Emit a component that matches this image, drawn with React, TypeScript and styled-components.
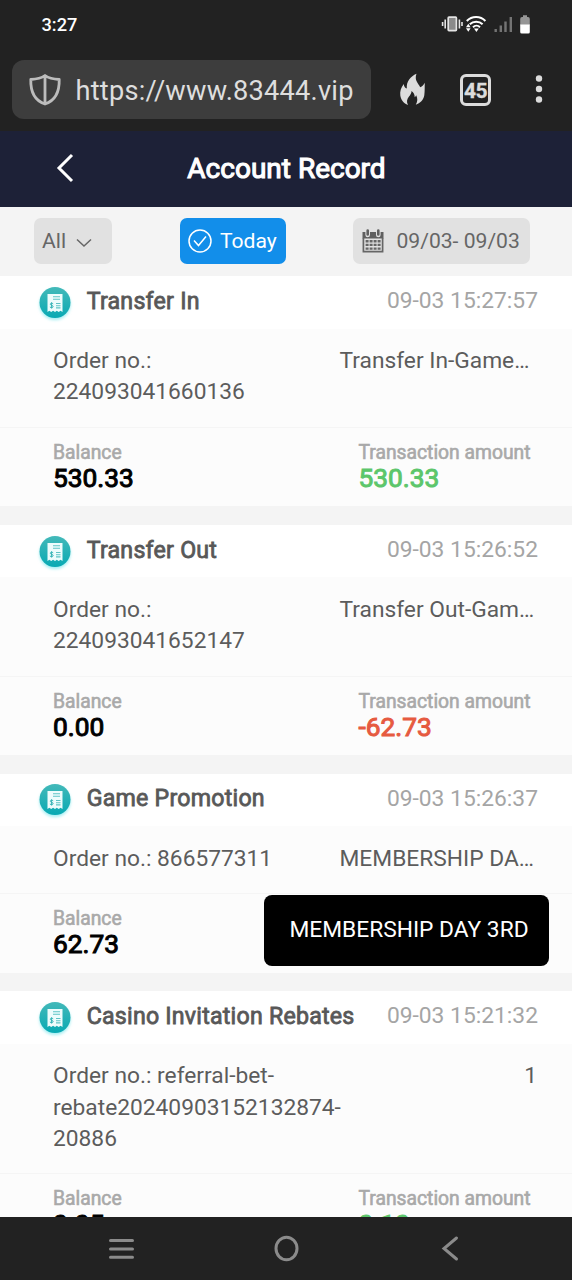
import React from "react";
import styled, { createGlobalStyle } from "styled-components";

const GlobalStyle = createGlobalStyle`
  * { box-sizing: border-box; }
  body { margin: 0; background: #222; font-family: Roboto, "Liberation Sans", sans-serif; }
`;

const Screen = styled.div`
  width: 572px;
  height: 1280px;
  display: flex;
  flex-direction: column;
  overflow: hidden;
  background: #f4f4f4;
`;

const StatusBar = styled.div`
  height: 48px;
  flex: none;
  display: flex;
  align-items: center;
  justify-content: space-between;
  padding: 0 40px 0 41.5px;
  background: #222;
`;

const Clock = styled.span`
  color: #fff;
  font-size: 18.2px;
  font-weight: 500;
`;

const StatusIcons = styled.svg`
  width: 92px;
  height: 22px;
`;

const BrowserBar = styled.div`
  height: 83px;
  flex: none;
  display: flex;
  align-items: flex-start;
  padding: 12px 0 0 12px;
  background: #222;
`;

const AddressBox = styled.div`
  width: 359px;
  height: 59px;
  display: flex;
  align-items: center;
  padding-left: 16px;
  border-radius: 12px;
  background: #3d3d3d;
`;

const Address = styled.span`
  margin-left: 13.5px;
  padding-top: 3px;
  color: #dedede;
  font-size: 27.2px;
  letter-spacing: 0.22px;
  white-space: nowrap;
`;

const BrowserTools = styled.div`
  height: 59px;
  display: flex;
  align-items: center;
`;

const Flame = styled.svg`
  width: 28px;
  height: 34px;
  margin-left: 27px;
`;

const TabCount = styled.span`
  width: 31px;
  height: 32px;
  margin-left: 34px;
  border: 3px solid #dcdcdc;
  border-radius: 6px;
  color: #dcdcdc;
  font-size: 21px;
  font-weight: 700;
  line-height: 28px;
  text-align: center;
  letter-spacing: -0.5px;
  -webkit-text-stroke: 0.3px #dcdcdc;
`;

const MoreDots = styled.svg`
  width: 8px;
  height: 30px;
  margin: -1px 0 0 44px;
`;

const TitleBar = styled.header`
  height: 76px;
  flex: none;
  display: grid;
  grid-template-columns: 87px 1fr 86px;
  align-items: center;
  background: #1d2137;
`;

const BackIcon = styled.svg`
  width: 20px;
  height: 30px;
  margin: -2px 0 0 55px;
`;

const Title = styled.h1`
  margin: 0;
  padding-bottom: 2px;
  color: #fff;
  font-size: 28px;
  font-weight: 400;
  text-align: center;
  white-space: nowrap;
  -webkit-text-stroke: 1.1px #fff;
`;

const Filters = styled.div`
  height: 69px;
  flex: none;
  display: flex;
  align-items: flex-start;
  justify-content: space-between;
  padding: 11px 42px 0 34px;
`;

const FilterButton = styled.button<{ $width: number; $active?: boolean; $pad: number; $gap: number }>`
  width: ${(p) => p.$width}px;
  height: 46px;
  display: flex;
  align-items: center;
  gap: ${(p) => p.$gap}px;
  padding: 0 0 0 ${(p) => p.$pad}px;
  border: 0;
  border-radius: 7px;
  background: ${(p) => (p.$active ? "#128eea" : "#e1e1e1")};
  color: ${(p) => (p.$active ? "#fff" : "#666")};
  font-family: inherit;
  font-size: 21.1px;
  line-height: 26px;
  white-space: nowrap;
`;

const Chevron = styled.svg`
  width: 16px;
  height: 10px;
  margin-top: 3px;
`;

const Records = styled.main`
  flex: 1;
  min-height: 0;
  overflow: hidden;
`;

const Card = styled.section`
  margin-bottom: 18.6px;
  background: #fcfcfc;
`;

const CardHead = styled.div`
  height: 52.5px;
  display: flex;
  align-items: center;
  padding: 0 34px 3px 34px;
  background: #fff;
`;

const ReceiptIcon = styled.svg`
  width: 42px;
  height: 42px;
  margin-top: 4px;
`;

const CardTitle = styled.h2`
  flex: 1;
  margin: 0 0 0 10.7px;
  color: #585858;
  font-size: 23.2px;
  font-weight: 400;
  letter-spacing: 0.22px;
  -webkit-text-stroke: 0.8px #585858;
  white-space: nowrap;
`;

const Time = styled.time`
  color: #a5a5a5;
  font-size: 22.8px;
  padding-bottom: 0.5px;
`;

const Details = styled.div`
  display: flex;
  justify-content: space-between;
  padding: 16.6px 35px 19.2px 53px;
  border-bottom: 1px solid #f5f5f5;
  color: #5c5c5c;
  font-size: 22.75px;
  line-height: 31.3px;
`;

const OrderNumber = styled.div`
  white-space: pre-line;
`;

const Remark = styled.div<{ $short?: boolean }>`
  width: ${(p) => (p.$short ? "auto" : "197.5px")};
  margin-left: auto;
  flex: none;
  white-space: nowrap;
`;

const Totals = styled.div`
  position: relative;
  height: 78.4px;
  display: grid;
  grid-template-columns: 305.5px 1fr;
  align-items: start;
  padding: 12px 0 0 53px;
`;

const Label = styled.div`
  color: #a9a9a9;
  font-size: 19.3px;
  line-height: 26px;
  white-space: nowrap;
  -webkit-text-stroke: 0.6px #a9a9a9;
`;

const Amount = styled.div<{ $color: string }>`
  color: ${(p) => p.$color};
  font-size: 26.3px;
  line-height: 25px;
  -webkit-text-stroke: 1px ${(p) => p.$color};
`;

const Tooltip = styled.div`
  position: absolute;
  top: 1px;
  right: 23px;
  width: 285px;
  height: 71px;
  padding-left: 5px;
  border-radius: 8px;
  background: #000;
  color: #fff;
  font-size: 22.75px;
  line-height: 70px;
  text-align: center;
  white-space: nowrap;
`;

const NavBar = styled.nav`
  height: 63px;
  flex: none;
  display: flex;
  align-items: center;
  justify-content: space-between;
  padding: 1px 107px 0 107px;
  background: #222;
`;

const NavIcon = styled.svg`
  width: 30px;
  height: 30px;
  fill: none;
  stroke: #8b8b8b;
  stroke-width: 3;
  stroke-linecap: round;
`;

interface Entry {
  title: string;
  time: string;
  order: string;
  remark: string;
  balance: string;
  amount?: string;
  color?: string;
  tip?: string;
}

const GREEN = "#5cc66b";
const RED = "#e65a40";

const entries: Entry[] = [
  { title: "Transfer In", time: "09-03 15:27:57", order: "Order no.:\n224093041660136", remark: "Transfer In-Game…", balance: "530.33", amount: "530.33", color: GREEN },
  { title: "Transfer Out", time: "09-03 15:26:52", order: "Order no.:\n224093041652147", remark: "Transfer Out-Gam…", balance: "0.00", amount: "-62.73", color: RED },
  { title: "Game Promotion", time: "09-03 15:26:37", order: "Order no.: 866577311", remark: "MEMBERSHIP DA…", balance: "62.73", tip: "MEMBERSHIP DAY 3RD" },
  { title: "Casino Invitation Rebates", time: "09-03 15:21:32", order: "Order no.: referral-bet-\nrebate20240903152132874-\n20886", remark: "1", balance: "0.05", amount: "0.10", color: GREEN },
];

function Receipt() {
  return (
    <ReceiptIcon viewBox="0 0 42 42">
      <defs>
        <linearGradient id="teal" x1="0" y1="0" x2="0" y2="1">
          <stop offset="0" stopColor="#43b9b9" />
          <stop offset="1" stopColor="#08a9b3" />
        </linearGradient>
        <filter id="glow" x="-20%" y="-20%" width="140%" height="140%">
          <feGaussianBlur stdDeviation="1.6" />
        </filter>
      </defs>
      <circle cx="21" cy="22.5" r="15.5" fill="#a5eef2" filter="url(#glow)" />
      <circle cx="21" cy="20.5" r="15.5" fill="url(#teal)" />
      <path d="M13.5 12h15v18l-1.9-1.3-1.9 1.3-1.9-1.3-1.8 1.3-1.9-1.3-1.9 1.3-1.9-1.3-1.8 1.3z" fill="#eefcfc" />
      <path d="M19 14.7h7M19 17.2h7M22 21.5h4.5M22 23.7h4.5M22 25.9h4.5" stroke="#5fc3c5" strokeWidth="1.1" />
      <path d="M19.2 21.8c-2-1.3-3.3-.3-2.8.8.5.9 2.7.6 2.7 1.9 0 1.2-1.7 1.6-3.2.5M17.6 20.3v6.2" stroke="#35b3b7" strokeWidth="1" fill="none" />
    </ReceiptIcon>
  );
}

function StatusGlyphs() {
  return (
    <StatusIcons viewBox="0 0 92 22">
      <rect x="8.2" y="4.2" width="8.2" height="13.4" rx="0.8" fill="#8a8a8a" stroke="#e4e4e4" strokeWidth="1.7" />
      <path d="M5.2 6.5v9M19.4 6.5v9M2.6 9v4M22 9v4" stroke="#e4e4e4" strokeWidth="1.6" />
      <g fill="none" stroke="#fff" strokeWidth="2">
        <path d="M26.8 8c5-5.3 13.6-5.3 18.6 0" />
        <path d="M29.8 11.200c3.500-3.400 9.400-3.400 12.800 0" />
        <path d="M33 14.200c2-1.900 5-1.900 7 0" />
      </g>
      <path d="M26 14.200l2.300-3.400 2.300 3.400zM26 15.300l2.300 3.400 2.300-3.400zM34 15.500h4.800l-2.400 3.400z" fill="#fff" />
      <path d="M55.700 16v3M60.800 12.600V19M65.500 8.600V19M70.800 4v15" stroke="#747474" strokeWidth="2.400" />
      <path d="M83 2.300h4v1.800h1a1.800 1.800 0 0 1 1.800 1.800v6.300h-9.600V5.900a1.800 1.800 0 0 1 1.800-1.800h1z" fill="#959595" />
      <path d="M80.200 11.500h9.600v7.500a1.500 1.500 0 0 1-1.500 1.500h-6.600a1.500 1.500 0 0 1-1.500-1.500z" fill="#fff" />
    </StatusIcons>
  );
}

function Calendar() {
  return (
    <svg width="22" height="24" viewBox="0 0 22 24">
      <path d="M.5 3h21v6.500H.5z" fill="#5f5f5f" />
      <path d="M1.400 9v13.700h19.200V9" fill="none" stroke="#666" strokeWidth="1.700" />
      <path d="M5.700 1v5M16.300 1v5" stroke="#e1e1e1" strokeWidth="4.600" strokeLinecap="round" />
      <path d="M5.700 1.500v4M16.300 1.500v4" stroke="#5f5f5f" strokeWidth="2.600" strokeLinecap="round" />
      <path d="M3.600 12.200h15M3.600 15.900h15M3.600 19.600h15" stroke="#666" strokeWidth="2.400" strokeDasharray="3 1" />
    </svg>
  );
}

export default function App() {
  return (
    <>
      <GlobalStyle />
      <Screen>
        <StatusBar>
          <Clock>3:27</Clock>
          <StatusGlyphs />
        </StatusBar>
        <BrowserBar>
          <AddressBox>
            <svg width="34" height="34" viewBox="0 0 34 34" fill="none" stroke="#bcbcbc" strokeWidth="2.8" strokeLinejoin="round">
              <path d="M17 2.5C13 5.5 8 6.3 2.8 6.5c-.3 10.5 2.2 20.5 14.2 24.5 12-4 14.5-14 14.2-24.5C26 6.3 21 5.5 17 2.5zM17 2.5V31" />
            </svg>
            <Address>https://www.83444.vip</Address>
          </AddressBox>
          <BrowserTools>
            <Flame viewBox="0 0 28 34">
              <path d="M18.5.8C12.500 3.500 8.200 8.500 8.800 15.500 7 15 6 13.500 5.800 11 3 14.500 1.800 18.500 2.300 22.500c.6 4.300 3.400 7.800 7.700 9.500-1.600-3.200-1.200-5.800.8-8.300 1.500-1.800 2.700-3.200 2.700-5.700 2.200 1.600 3.300 3.700 3.200 6.300.8-.5 1.300-1.200 1.500-2 1.600 3.200 1.500 6.300-.4 9.500 4.400-1.500 7.700-4.800 8.500-9.500.6-4.300.3-8.300.5-12.500-1.300 2.200-2.300 3.400-4.600 4.500C20.500 10.500 16 7.500 18.500.8z" fill="#dcdcdc" />
            </Flame>
            <TabCount>45</TabCount>
            <MoreDots viewBox="0 0 8 30" fill="#dcdcdc">
              <circle cx="4" cy="4.5" r="3.200" />
              <circle cx="4" cy="15" r="3.200" />
              <circle cx="4" cy="25.5" r="3.200" />
            </MoreDots>
          </BrowserTools>
        </BrowserBar>
        <TitleBar>
          <BackIcon viewBox="0 0 20 30" fill="none" stroke="#fff" strokeWidth="3">
            <path d="M17 2L4 15l13 13" />
          </BackIcon>
          <Title>Account Record</Title>
        </TitleBar>
        <Filters>
          <FilterButton $width={78} $pad={8} $gap={10}>
            All
            <Chevron viewBox="0 0 16 10" fill="none" stroke="#666" strokeWidth="1.5">
              <path d="M1 1.500l7 6.500 7-6.500" />
            </Chevron>
          </FilterButton>
          <FilterButton $width={106} $pad={8} $gap={8.5} $active>
            <svg width="24" height="24" viewBox="0 0 24 24" fill="none" stroke="#fff" strokeWidth="1.5">
              <circle cx="12" cy="12" r="11" />
              <path d="M6 11.500l4.500 5L18 7.500" />
            </svg>
            Today
          </FilterButton>
          <FilterButton $width={177} $pad={9} $gap={12.5}>
            <Calendar />
            09/03- 09/03
          </FilterButton>
        </Filters>
        <Records>
          {entries.map((e) => (
            <Card key={e.time}>
              <CardHead>
                <Receipt />
                <CardTitle>{e.title}</CardTitle>
                <Time>{e.time}</Time>
              </CardHead>
              <Details>
                <OrderNumber>{e.order}</OrderNumber>
                <Remark $short={e.remark.length < 3}>{e.remark}</Remark>
              </Details>
              <Totals>
                <div>
                  <Label>Balance</Label>
                  <Amount $color="#000">{e.balance}</Amount>
                </div>
                {e.amount && (
                  <div>
                    <Label>Transaction amount</Label>
                    <Amount $color={e.color || GREEN}>{e.amount}</Amount>
                  </div>
                )}
                {e.tip && <Tooltip>{e.tip}</Tooltip>}
              </Totals>
            </Card>
          ))}
        </Records>
        <NavBar>
          <NavIcon viewBox="0 0 30 30">
            <path d="M3.500 6.500h22M3.500 15h22M3.500 23.200h22" />
          </NavIcon>
          <NavIcon viewBox="0 0 30 30">
            <ellipse cx="15.500" cy="14.500" rx="10.500" ry="11.300" />
          </NavIcon>
          <NavIcon viewBox="0 0 30 30">
            <path d="M21.500 4L9 14.500 21.500 25" />
          </NavIcon>
        </NavBar>
      </Screen>
    </>
  );
}
